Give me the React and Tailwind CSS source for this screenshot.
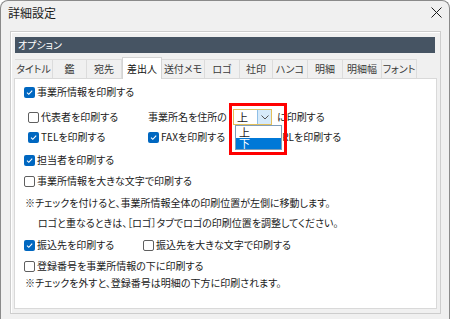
import React from "react";

function Box({ on }) {
  if (on) {
    return (
      <span className="w-[11px] h-[11px] rounded-[2px] bg-[#0067c0] flex items-center justify-center shrink-0">
        <svg width="9" height="9" viewBox="0 0 9 9">
          <path d="M2 4.6 L3.8 6.3 L7.2 2.6" stroke="#fff" strokeWidth="1.1" fill="none" />
        </svg>
      </span>
    );
  }
  return <span className="w-[11px] h-[11px] rounded-[2px] border border-[#5f5f5f] bg-white shrink-0" />;
}

function Check({ on, label, className = "" }) {
  return (
    <div className={"flex items-center gap-[2px] " + className}>
      <Box on={on} />
      <span className="whitespace-nowrap">{label}</span>
    </div>
  );
}

const tabs = [
  ["タイトル", "w-[38px]"],
  ["鑑", "w-[34px]"],
  ["宛先", "w-[35px]"],
  ["差出人", "w-[40px]"],
  ["送付メモ", "w-[43px]"],
  ["ロゴ", "w-[35px]"],
  ["社印", "w-[33px]"],
  ["ハンコ", "w-[35px]"],
  ["明細", "w-[35px]"],
  ["明細幅", "w-[39px]"],
  ["フォント", "w-[35px]"],
];

export default function App() {
  return (
    <div className="w-[450px] h-[319px] overflow-hidden bg-[#f0f0f0] border border-b-0 border-[#8a8a8a] rounded-t-[8px] text-[#1b1b1b] font-['Noto_Sans_CJK_JP','Noto_Sans',sans-serif] [font-feature-settings:'palt']">
      {/* title bar */}
      <div className="h-[23px] flex items-center justify-between pl-[7px] pr-[7px]">
        <span className="text-[12px] leading-none">詳細設定</span>
        <svg width="11" height="11" viewBox="0 0 11 11">
          <path d="M0.5 0.5 L10.5 10.5 M10.5 0.5 L0.5 10.5" stroke="#1b1b1b" strokeWidth="1" />
        </svg>
      </div>

      {/* group box */}
      <div className="mt-[7px] ml-[9px] w-[431px] h-[283px] border border-[#cdcdcd] shadow-[inset_1px_1px_0_#fff] px-[3px] pt-[5px] pb-[4px] flex flex-col">
        <div className="h-[16px] ml-[1px] mr-[2px] bg-[#465463] text-white text-[10px] leading-none flex items-center pl-[3px]">
          オプション
        </div>

        {/* tabs */}
        <div className="mt-[4px] h-[21px] flex items-end pl-[1px] text-[10px] leading-none">
          {tabs.map(([t, w]) =>
            t === "差出人" ? (
              <div
                key={t}
                className={w + " h-[22px] -mb-[1px] relative z-10 bg-white border border-b-0 border-[#d4d4d4] flex items-center justify-center text-[#111]"}
              >
                {t}
              </div>
            ) : (
              <div
                key={t}
                className={w + " h-[19px] border-t border-r border-[#dcdcdc] flex items-center justify-center text-[#3a3a3a]"}
              >
                {t}
              </div>
            )
          )}
        </div>

        {/* panel */}
        <div className="flex-1 bg-white border border-[#d9d9d9] text-[10px] leading-none">
          <div className="flex flex-col pt-[3px]">
            <Check on label="事業所情報を印刷する" className="h-[20px] pl-[9px]" />

            <div className="h-[20px] mt-[5px] pl-[13px] flex items-center">
              <Check label="代表者を印刷する" className="w-[120px]" />
              <span className="w-[85px] whitespace-nowrap">事業所名を住所の</span>
              <div className="relative">
                <div className="w-[39px] h-[16px] flex border border-[#e3bf5a] bg-white">
                  <span className="flex-1 flex items-center pl-[3px] text-[11px]">上</span>
                  <span className="w-[14px] bg-[#d6eafa] border-l border-[#8fbfe6] flex items-center justify-center">
                    <svg width="8" height="5" viewBox="0 0 8 5">
                      <path d="M0.5 0.5 L4 4 L7.5 0.5" stroke="#555" strokeWidth="1" fill="none" />
                    </svg>
                  </span>
                </div>
                {/* dropdown list */}
                <div className="absolute left-[2px] top-[16px] w-[47px] h-[25px] z-20 bg-white border border-[#7f9db9] flex flex-col text-[11px]">
                  <div className="h-[12px] flex items-center pl-[3px]">上</div>
                  <div className="flex-1 flex items-center pl-[3px] bg-[#0078d7] text-white">下</div>
                </div>
                {/* highlight */}
                <div className="absolute -left-[4px] -top-[6px] w-[58px] h-[52px] z-30 border-[3px] border-[#ff0000] pointer-events-none" />
              </div>
              <span className="ml-[5px] whitespace-nowrap">に印刷する</span>
            </div>

            <div className="h-[20px] pl-[13px] flex items-center">
              <Check on label="TELを印刷する" className="w-[120px]" />
              <Check on label="FAXを印刷する" className="w-[114px]" />
              <Check on label="URLを印刷する" />
            </div>

            <Check on label="担当者を印刷する" className="h-[20px] mt-[3px] pl-[9px]" />
            <Check label="事業所情報を大きな文字で印刷する" className="h-[20px] mt-[1px] pl-[9px]" />

            <div className="h-[20px] mt-[2px] pl-[10px] flex items-center whitespace-nowrap">
              ※チェックを付けると、事業所情報全体の印刷位置が左側に移動します。
            </div>
            <div className="h-[20px] pl-[23px] flex items-center whitespace-nowrap">
              ロゴと重なるときは、［ロゴ］タブでロゴの印刷位置を調整してください。
            </div>

            <div className="h-[20px] mt-[2px] pl-[9px] flex items-center">
              <Check on label="振込先を印刷する" className="w-[119px]" />
              <Check label="振込先を大きな文字で印刷する" />
            </div>
            <Check label="登録番号を事業所情報の下に印刷する" className="h-[20px] mt-[1px] pl-[9px]" />
            <div className="h-[14px] pl-[10px] flex items-center whitespace-nowrap">
              ※チェックを外すと、登録番号は明細の下方に印刷されます。
            </div>
          </div>
        </div>
      </div>
    </div>
  );
}
